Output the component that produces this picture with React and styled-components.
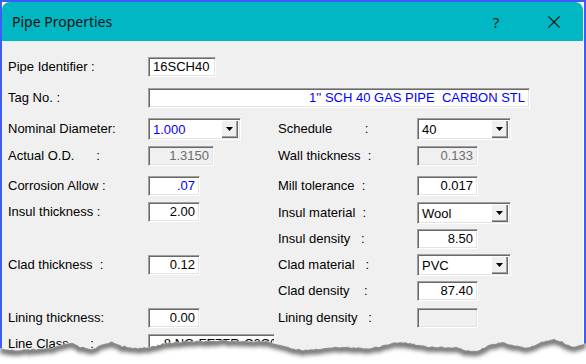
import React from 'react';
import styled, { createGlobalStyle } from 'styled-components';

const GlobalStyle = createGlobalStyle`
    html, body {
        margin: 0;
        padding: 0;
        background: #ffffff;
    }
    #root {
        width: 586px;
        height: 364px;
    }
`;

const UI_FONT = `"Liberation Sans", Arial, sans-serif`;

const Shell = styled.div`
    position: relative;
    width: 586px;
    height: 364px;
    overflow: hidden;
    background: #ffffff;
`;

const Frame = styled.div`
    box-sizing: border-box;
    height: 100%;
    border: 2px solid #3c5ef5;
    border-bottom: 0;
    padding-right: 1px;
    background: #ffffff;
`;

const Window = styled.div`
    display: flex;
    flex-direction: column;
    height: 100%;
    background: #f0f0f0;
    border-radius: 8px 8px 0 0;
    overflow: hidden;
`;

const TitleBar = styled.div`
    display: flex;
    align-items: center;
    height: 39px;
    padding-left: 10px;
    padding-right: 6px;
    background: #00b7c3;
`;

const Title = styled.span`
    font-family: "Noto Sans", "Liberation Sans", sans-serif;
    font-size: 14px;
    color: #111111;
`;

const CaptionButtons = styled.div`
    display: flex;
    gap: 12px;
    margin-left: auto;
`;

const CaptionButton = styled.div`
    display: flex;
    align-items: center;
    justify-content: center;
    width: 46px;
    height: 39px;
    font-family: "Noto Sans", "Liberation Sans", sans-serif;
    font-size: 15px;
    color: #1a1a1a;
`;

const Body = styled.div`
    flex: 1;
    padding: 16px 0 0 6px;
    font-family: ${UI_FONT};
    font-size: 13px;
    color: #000000;
`;

const Row = styled.div`
    display: grid;
    grid-template-columns: 140px 130px 139px 1fr;
    align-items: start;
    height: ${p => p.$h}px;
`;

const Label = styled.span`
    white-space: pre;
    line-height: ${p => p.$lh || 20}px;
    margin-top: ${p => p.$mt || 0}px;
`;

const sunken = `
    box-sizing: border-box;
    border-top: 1px solid #a0a0a0;
    border-left: 1px solid #a0a0a0;
    border-bottom: 1px solid #ffffff;
    border-right: 1px solid #ffffff;
    box-shadow: inset 1px 1px 0 #696969, inset -1px -1px 0 #e3e3e3;
`;

const TextBox = styled.div`
    ${sunken}
    width: ${p => p.$w}px;
    height: 20px;
    grid-column: ${p => p.$span || 'auto'};
    padding: 0 4px;
    line-height: 18px;
    white-space: pre;
    overflow: hidden;
    text-align: ${p => p.$align || 'left'};
    background: ${p => (p.$disabled ? '#f0f0f0' : '#ffffff')};
    color: ${p => (p.$disabled ? '#6d6d6d' : p.$blue ? '#0000ff' : '#000000')};
`;

const Combo = styled.div`
    ${sunken}
    display: flex;
    align-items: center;
    width: ${p => p.$w}px;
    height: 22px;
    margin-top: ${p => p.$mt || 0}px;
    padding: 1px 2px;
    background: #ffffff;
`;

const ComboValue = styled.span`
    flex: 1;
    padding-left: 2px;
    color: ${p => (p.$blue ? '#0000ff' : '#000000')};
`;

const DropButton = styled.div`
    display: flex;
    align-items: center;
    justify-content: center;
    width: 17px;
    height: 18px;
    background: #f0f0f0;
    box-shadow: inset 1px 1px 0 #ffffff, inset -1px -1px 0 #696969, inset -2px -2px 0 #a0a0a0;
`;

const TornEdge = styled.svg`
    position: absolute;
    left: 0;
    top: 328px;
`;

// torn paper edge along the bottom of the screenshot
function buildEdge() {
    const keys = [
        [0, 349], [18, 350], [35, 349], [52, 348], [64, 344], [72, 343], [80, 347], [92, 349],
        [104, 344], [112, 342], [122, 346], [136, 348], [150, 347], [162, 344], [176, 342],
        [190, 341], [205, 341], [220, 340], [236, 341], [252, 341], [266, 341], [276, 344],
        [288, 347], [302, 350], [316, 349], [330, 347], [348, 347], [366, 348], [382, 346],
        [396, 342], [410, 343], [424, 346], [440, 347], [456, 347], [466, 350], [478, 351],
        [490, 344], [503, 342], [514, 345], [528, 348], [542, 342], [552, 339], [562, 341],
        [571, 347], [578, 346], [586, 343],
    ];
    const pts = [];
    for (let x = 0; x <= 586; x += 2) {
        let i = 0;
        while (i < keys.length - 2 && keys[i + 1][0] < x) i++;
        const [x0, y0] = keys[i];
        const [x1, y1] = keys[i + 1];
        const t = Math.min(1, Math.max(0, (x - x0) / (x1 - x0)));
        const noise = Math.sin(x * 12.9898) * 43758.5453;
        const jitter = (noise - Math.floor(noise) - 0.5) * 1.6;
        pts.push([x, y0 + (y1 - y0) * t + jitter - 328]);
    }
    const line = pts.map(([x, y], i) => `${i ? 'L' : 'M'}${x} ${y.toFixed(1)}`).join(' ');
    return { line, fill: `${line} L586 36 L0 36 Z` };
}

const EDGE = buildEdge();

const Field = ({ w, value, align = 'right', blue, disabled }) => (
    <TextBox $w={w} $align={align} $blue={blue} $disabled={disabled}>{value}</TextBox>
);

const Dropdown = ({ w, value, blue, mt }) => (
    <Combo $w={w} $mt={mt}>
        <ComboValue $blue={blue}>{value}</ComboValue>
        <DropButton>
            <svg width="7" height="4" viewBox="0 0 7 4">
                <polygon points="0,0 7,0 3.5,4" fill="#000" />
            </svg>
        </DropButton>
    </Combo>
);

export default function App() {
    return (
        <Shell>
            <GlobalStyle />
            <Frame>
                <Window>
                    <TitleBar>
                        <Title>Pipe Properties</Title>
                        <CaptionButtons>
                            <CaptionButton>?</CaptionButton>
                            <CaptionButton>
                                <svg width="12" height="12" viewBox="0 0 12 12">
                                    <path d="M0.5 0.5 L11.5 11.5 M11.5 0.5 L0.5 11.5" stroke="#1a1a1a" strokeWidth="1.1" fill="none" />
                                </svg>
                            </CaptionButton>
                        </CaptionButtons>
                    </TitleBar>
                    <Body>
                        <Row $h={31}>
                            <Label>Pipe Identifier :</Label>
                            <Field w={68} value="16SCH40" align="left" />
                        </Row>
                        <Row $h={30}>
                            <Label>Tag No. :</Label>
                            <TextBox $w={382} $span="2 / 5" $align="right" $blue>1'' SCH 40 GAS PIPE  CARBON STL</TextBox>
                        </Row>
                        <Row $h={28}>
                            <Label $lh={22}>Nominal Diameter:</Label>
                            <Dropdown w={93} value="1.000" blue />
                            <Label $lh={22}>{'Schedule         :'}</Label>
                            <Dropdown w={94} value="40" />
                        </Row>
                        <Row $h={30}>
                            <Label>{'Actual O.D.      :'}</Label>
                            <Field w={66} value="1.3150" disabled />
                            <Label>{'Wall thickness  :'}</Label>
                            <Field w={61} value="0.133" disabled />
                        </Row>
                        <Row $h={26}>
                            <Label>Corrosion Allow :</Label>
                            <Field w={52} value=".07" blue />
                            <Label>{'Mill tolerance  :'}</Label>
                            <Field w={61} value="0.017" />
                        </Row>
                        <Row $h={27}>
                            <Label>Insul thickness :</Label>
                            <Field w={52} value="2.00" />
                            <Label $lh={22}>{'Insul material  :'}</Label>
                            <Dropdown w={94} value="Wool" />
                        </Row>
                        <Row $h={26}>
                            <span />
                            <span />
                            <Label>{'Insul density   :'}</Label>
                            <Field w={61} value="8.50" />
                        </Row>
                        <Row $h={26}>
                            <Label>{'Clad thickness  :'}</Label>
                            <Field w={52} value="0.12" />
                            <Label $lh={22} $mt={-1}>{'Clad material   :'}</Label>
                            <Dropdown w={94} value="PVC" mt={-1} />
                        </Row>
                        <Row $h={27}>
                            <span />
                            <span />
                            <Label>{'Clad density    :'}</Label>
                            <Field w={61} value="87.40" />
                        </Row>
                        <Row $h={26}>
                            <Label>Lining thickness:</Label>
                            <Field w={52} value="0.00" />
                            <Label>{'Lining density   :'}</Label>
                            <Field w={61} value="" disabled />
                        </Row>
                        <Row $h={30}>
                            <Label>{'Line Class      :'}</Label>
                            <Field w={127} value="   8 NG-FE7FR-C2C0" align="left" />
                        </Row>
                    </Body>
                </Window>
            </Frame>
            <TornEdge width="586" height="36" viewBox="0 0 586 36">
                <defs>
                    <filter id="edgeBlur" x="-5%" y="-50%" width="110%" height="200%">
                        <feGaussianBlur stdDeviation="2" />
                    </filter>
                    <clipPath id="paper">
                        <path d={EDGE.fill} />
                    </clipPath>
                </defs>
                <path d={EDGE.fill} fill="#ffffff" />
                <g clipPath="url(#paper)">
                    <path d={EDGE.line} transform="translate(0 2)" stroke="#6f6f6f" strokeWidth="6" fill="none" filter="url(#edgeBlur)" />
                </g>
            </TornEdge>
        </Shell>
    );
}
